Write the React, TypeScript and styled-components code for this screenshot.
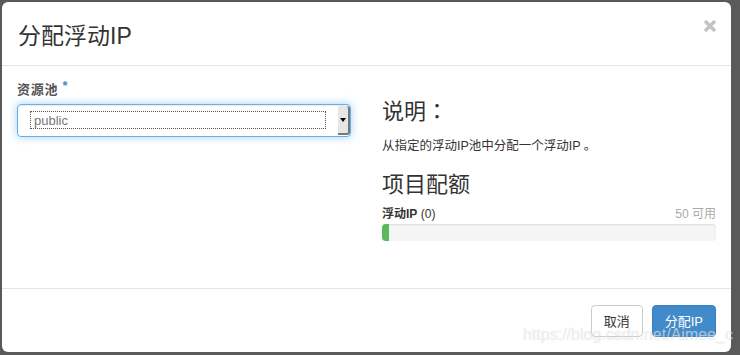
import React from 'react';
import styled, { createGlobalStyle } from 'styled-components';

const GlobalStyle = createGlobalStyle`
    html, body {
        margin: 0;
        padding: 0;
        background: #5a5a5a;
    }
    body {
        font-family: "Helvetica Neue", "Liberation Sans", "Noto Sans CJK SC", sans-serif;
        color: #333;
    }
`;

const Backdrop = styled.div`
    position: relative;
    width: 740px;
    height: 355px;
    padding: 2px 9px 3px 2px;
    box-sizing: border-box;
    background: #5a5a5a;
    overflow: hidden;
`;

const Modal = styled.div`
    width: 729px;
    height: 350px;
    background: #fff;
    border-radius: 6px;
    display: flex;
    flex-direction: column;
`;

const Header = styled.div`
    height: 63px;
    padding: 0 14px 0 16px;
    border-bottom: 1px solid #e5e5e5;
    display: flex;
    justify-content: space-between;
`;

const Title = styled.h4`
    margin: 0;
    align-self: center;
    font-size: 23px;
    font-weight: normal;
    color: #333;
    font-family: "Liberation Sans", "Noto Sans CJK SC", sans-serif;
`;

const Close = styled.svg`
    margin-top: 17px;
    width: 14px;
    height: 14px;
`;

const Body = styled.div`
    flex: 1;
    padding: 15px 15px 0 15px;
    display: grid;
    grid-template-columns: 334px 334px;
    column-gap: 31px;
    align-items: start;
`;

const Label = styled.label`
    display: block;
    height: 18px;
    font-size: 13px;
    line-height: 18px;
    font-weight: bold;
    letter-spacing: 0.8px;
    color: #555;
`;

const Required = styled.sup`
    margin-left: 4px;
    color: #428bca;
    font-size: 13px;
    vertical-align: 4px;
    line-height: 0;
`;

const Select = styled.div`
    margin-top: 5px;
    height: 33px;
    box-sizing: border-box;
    border: 1px solid #66afe9;
    border-radius: 4px;
    box-shadow: inset 0 1px 1px rgba(0, 0, 0, 0.075), 0 0 8px rgba(102, 175, 233, 0.6);
    display: flex;
    align-items: stretch;
    padding: 1px 0 1px 12px;
`;

const SelectValue = styled.div`
    flex: 1;
    margin: 5px 12px 6px 0;
    border: 1px dotted #555;
    padding-left: 3px;
    font-size: 13px;
    line-height: 17px;
    color: #777;
`;

const Arrow = styled.div`
    width: 10px;
    background: #e6e6e6;
    border-right: 2px solid #777;
    border-bottom: 2px solid #777;
    border-radius: 0 3px 3px 0;
    display: flex;
    align-items: center;
    justify-content: center;

    &::after {
        content: '';
        border-left: 3px solid transparent;
        border-right: 3px solid transparent;
        border-top: 4px solid #000;
    }
`;

const Heading = styled.h3<{ $top: number }>`
    margin: ${p => p.$top}px 0 0 0;
    font-size: 22px;
    line-height: 24px;
    font-weight: normal;
    color: #333;
`;

const Colon = styled.span`
    font-family: "Noto Sans CJK TC", sans-serif;
`;

const Text = styled.p`
    margin: 13px 0 0 0;
    font-size: 12.5px;
    line-height: 18px;
    color: #333;
`;

const QuotaRow = styled.div`
    margin-top: 8px;
    display: flex;
    justify-content: space-between;
    font-size: 12px;
    line-height: 18px;

    strong {
        font-weight: bold;
        color: #333;
    }
`;

const Muted = styled.span`
    color: #aaa;
`;

const Progress = styled.div`
    margin-top: 1px;
    height: 17px;
    background: #f5f5f5;
    border-radius: 4px;
    box-shadow: inset 0 1px 2px rgba(0, 0, 0, 0.1);
    overflow: hidden;
`;

const ProgressBar = styled.div`
    height: 100%;
    background: #5cb85c;
`;

const Footer = styled.div`
    height: 63px;
    border-top: 1px solid #e5e5e5;
    padding: 0 15px;
    display: flex;
    justify-content: flex-end;
    align-items: center;
    gap: 9px;
`;

const Button = styled.button<{ $primary?: boolean }>`
    height: 32px;
    padding: 0 12px;
    border-radius: 4px;
    font-family: "Liberation Sans", "Noto Sans CJK SC", sans-serif;
    font-size: 13px;
    border: 1px solid ${p => (p.$primary ? '#3b7fbd' : '#ccc')};
    background: ${p => (p.$primary ? '#428bca' : '#fff')};
    color: ${p => (p.$primary ? '#fff' : '#333')};
`;

const Watermark = styled.div`
    position: absolute;
    left: 523px;
    top: 326px;
    font-family: "Liberation Sans", sans-serif;
    font-size: 16px;
    color: rgba(255, 255, 255, 0.5);
    text-shadow: 0 0 1px rgba(150, 150, 150, 0.35);
    white-space: nowrap;
    pointer-events: none;
`;

const App: React.FC = () => {
    const used = 0;
    const total = 50;
    const pct = Math.max(2, (used / total) * 100);
    return (
        <>
            <GlobalStyle />
            <Backdrop>
                <Modal>
                    <Header>
                        <Title>分配浮动IP</Title>
                        <Close viewBox="0 0 14 14">
                            <path d="M2 2 L12 12 M12 2 L2 12" stroke="#c4c4c4" strokeWidth="3.4" />
                        </Close>
                    </Header>
                    <Body>
                        <section>
                            <Label>
                                资源池<Required>*</Required>
                            </Label>
                            <Select>
                                <SelectValue>public</SelectValue>
                                <Arrow />
                            </Select>
                        </section>
                        <section>
                            <Heading $top={16}>说明<Colon>：</Colon></Heading>
                            <Text>从指定的浮动IP池中分配一个浮动IP 。</Text>
                            <Heading $top={18}>项目配额</Heading>
                            <QuotaRow>
                                <span>
                                    <strong>浮动IP</strong> ({used})
                                </span>
                                <Muted>{total} 可用</Muted>
                            </QuotaRow>
                            <Progress>
                                <ProgressBar style={{ width: `${pct}%` }} />
                            </Progress>
                        </section>
                    </Body>
                    <Footer>
                        <Button>取消</Button>
                        <Button $primary>分配IP</Button>
                    </Footer>
                </Modal>
                <Watermark>https://blog.csdn.net/Aimee_c</Watermark>
            </Backdrop>
        </>
    );
};

export default App;
